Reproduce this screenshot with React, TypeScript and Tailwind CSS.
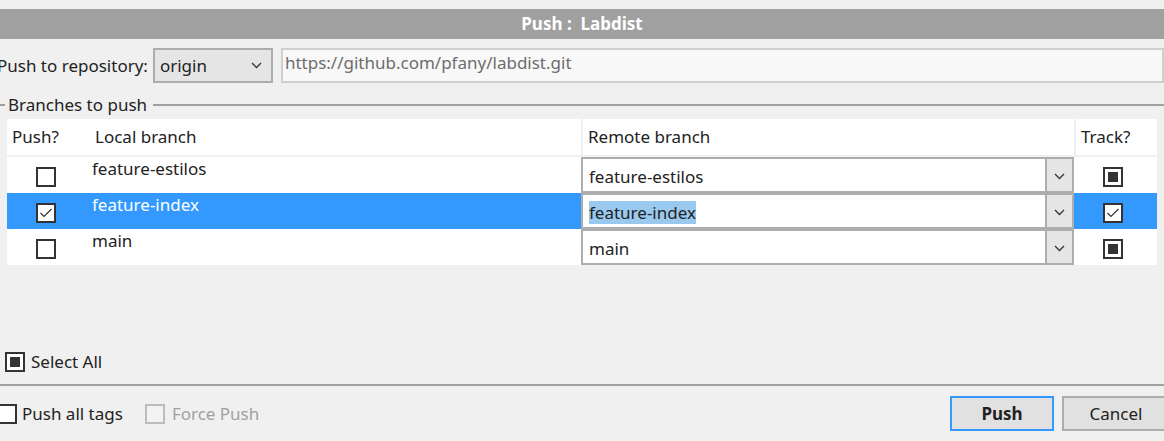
import React from "react";

const branches = [
    { name: "feature-estilos", push: false, track: "mixed", selected: false },
    { name: "feature-index", push: true, track: "checked", selected: true },
    { name: "main", push: false, track: "mixed", selected: false },
];

function Chevron() {
    return (
        <svg width="11" height="7" viewBox="0 0 11 7" className="text-[#333]">
            <path d="M1 1 L5.5 5.5 L10 1" fill="none" stroke="currentColor" strokeWidth="1.3" />
        </svg>
    );
}

function CheckBox({ state, disabled = false }: { state: "off" | "checked" | "mixed"; disabled?: boolean }) {
    return (
        <div
            className={`flex h-[20px] w-[20px] shrink-0 items-center justify-center border-2 ${disabled ? "border-[#bcbcbc] bg-[#f3f3f3]" : "border-[#333] bg-white"}`}
        >
            {state === "mixed" && <div className="h-[10px] w-[10px] bg-[#333]" />}
            {state === "checked" && (
                <svg width="16" height="16" viewBox="0 0 16 16">
                    <path d="M2.5 8 L6 11.5 L13.5 4" fill="none" stroke="#333" strokeWidth="1.2" />
                </svg>
            )}
        </div>
    );
}

export default function App() {
    return (
        <div className="h-[441px] w-[1164px] overflow-hidden bg-[#f0f0f0] pt-[9px] text-[17px] text-[#222] [font-family:'Noto_Sans',sans-serif]">
            {/* Title */}
            <div className="flex h-[30px] items-center justify-center bg-[#a0a0a0] font-bold text-white">
                Push :&nbsp; Labdist
            </div>

            {/* Repository */}
            <div className="mt-[9px] flex h-[35px] items-center">
                <span className="-ml-[3px] whitespace-nowrap">Push to repository:</span>
                <div className="ml-[5px] flex h-[35px] w-[120px] items-center justify-between border-2 border-[#adadad] bg-[#e5e5e5] pl-[5px] pr-[9px]">
                    <span>origin</span>
                    <Chevron />
                </div>
                <div className="ml-[8px] flex h-[35px] flex-1 items-start border-2 border-[#cfcfcf] bg-[#f8f8f8] pl-[2px] text-[#6d6d6d]">
                    https://github.com/pfany/labdist.git
                </div>
            </div>

            {/* Group header */}
            <div className="mt-[8px] flex h-[28px] items-center">
                <div className="h-[2px] w-[5px] bg-[#a0a0a0]" />
                <span className="px-[3px] whitespace-nowrap">Branches to push</span>
                <div className="ml-[3px] h-[2px] flex-1 bg-[#a0a0a0]" />
            </div>

            {/* Table */}
            <div className="ml-[7px] w-[1150px] bg-white">
                <div className="grid h-[38px] grid-cols-[81px_493px_493px_83px] items-center border-b-2 border-[#f0f0f0]">
                    <span className="pl-[5px]">Push?</span>
                    <span className="pl-[7px]">Local branch</span>
                    <span className="h-full border-l-2 border-[#f0f0f0] pl-[5px] leading-[36px]">Remote branch</span>
                    <span className="h-full border-l-2 border-[#f0f0f0] pl-[5px] leading-[36px]">Track?</span>
                </div>
                {branches.map((b) => (
                    <div key={b.name} className="grid h-[36px] grid-cols-[81px_493px_493px_83px]">
                        <div className={`flex items-center justify-center pr-[4px] pt-[4px] ${b.selected ? "bg-[#3399ff]" : ""}`}>
                            <CheckBox state={b.push ? "checked" : "off"} />
                        </div>
                        <div className={`pl-[4px] leading-[24px] ${b.selected ? "bg-[#3399ff] text-white" : ""}`}>{b.name}</div>
                        <div className="flex border-2 border-[#adadad] bg-white">
                            <div className="flex flex-1 items-center pl-[6px] pt-[3px]">
                                <span className={`leading-[23px] ${b.selected ? "bg-[#99c9ef]" : ""}`}>{b.name}</span>
                            </div>
                            <div className="flex w-[27px] items-center justify-center border-l-2 border-[#adadad] bg-[#e5e5e5] pt-[2px]">
                                <Chevron />
                            </div>
                        </div>
                        <div className={`flex items-center justify-center pr-[6px] pt-[3px] ${b.selected ? "bg-[#3399ff]" : ""}`}>
                            <CheckBox state={b.track as "checked" | "mixed"} />
                        </div>
                    </div>
                ))}
            </div>

            {/* Select all */}
            <div className="mt-[87px] flex h-[20px] items-center gap-[6px] pl-[5px]">
                <CheckBox state="mixed" />
                <span>Select All</span>
            </div>

            <div className="mt-[12px] h-[2px] bg-[#a0a0a0]" />

            {/* Bottom */}
            <div className="mt-[10px] flex items-center">
                <div className="-ml-[3px] flex items-center gap-[5px]">
                    <CheckBox state="off" />
                    <span>Push all tags</span>
                </div>
                <div className="ml-[22px] flex items-center gap-[7px] text-[#a0a0a0]">
                    <CheckBox state="off" disabled />
                    <span>Force Push</span>
                </div>
                <div className="ml-auto flex gap-[8px]">
                    <button className="h-[35px] w-[104px] border-2 border-[#3399ff] bg-[#e1e1e1] font-bold">Push</button>
                    <button className="-mr-[6px] h-[35px] w-[108px] border-2 border-[#adadad] bg-[#e1e1e1]">Cancel</button>
                </div>
            </div>
        </div>
    );
}
